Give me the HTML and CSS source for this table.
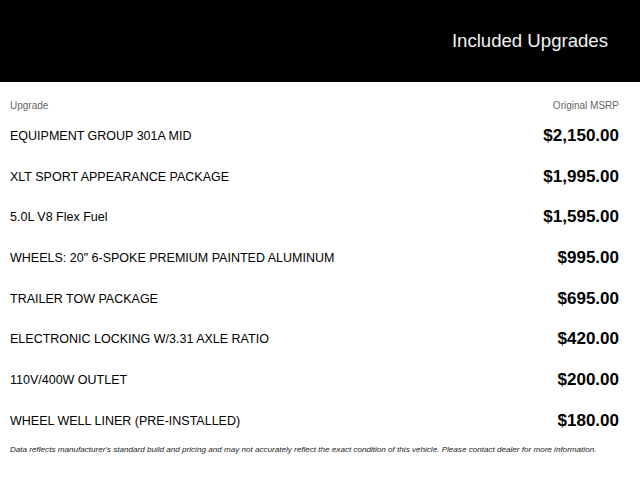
FILE: index.html
```html
<!DOCTYPE html>
<html>
<head>
<meta charset="utf-8">
<link rel="stylesheet" href="styles.css">
</head>
<body>
<header class="banner">
  <h1 class="banner-title">Included Upgrades</h1>
</header>
<main class="upgrades">
  <div class="col-head">
    <span>Upgrade</span>
    <span>Original MSRP</span>
  </div>
  <div class="row"><span class="name">EQUIPMENT GROUP 301A MID</span><span class="price">$2,150.00</span></div>
  <div class="row"><span class="name">XLT SPORT APPEARANCE PACKAGE</span><span class="price">$1,995.00</span></div>
  <div class="row"><span class="name">5.0L V8 Flex Fuel</span><span class="price">$1,595.00</span></div>
  <div class="row"><span class="name">WHEELS: 20" 6-SPOKE PREMIUM PAINTED ALUMINUM</span><span class="price">$995.00</span></div>
  <div class="row"><span class="name">TRAILER TOW PACKAGE</span><span class="price">$695.00</span></div>
  <div class="row"><span class="name">ELECTRONIC LOCKING W/3.31 AXLE RATIO</span><span class="price">$420.00</span></div>
  <div class="row"><span class="name">110V/400W OUTLET</span><span class="price">$200.00</span></div>
  <div class="row"><span class="name">WHEEL WELL LINER (PRE-INSTALLED)</span><span class="price">$180.00</span></div>
  <p class="note">Data reflects manufacturer's standard build and pricing and may not accurately reflect the exact condition of this vehicle. Please contact dealer for more information.</p>
</main>
</body>
</html>
```

FILE: styles.css
```css
html, body {
  margin: 0;
  padding: 0;
  background: #fff;
  font-family: "Liberation Sans", Arial, sans-serif;
  color: #000;
}
.banner {
  background: #000;
  height: 82px;
  display: flex;
  align-items: center;
  justify-content: flex-end;
  padding-right: 32px;
}
.banner-title {
  margin: 0;
  font-size: 18.6px;
  font-weight: normal;
  color: #f2f2f2;
  line-height: 22px;
}
.upgrades {
  padding: 0 21px 0 10px;
  display: flex;
  flex-direction: column;
}
.col-head {
  display: flex;
  justify-content: space-between;
  font-size: 10px;
  line-height: 12px;
  color: #666;
  padding-top: 18px;
  padding-bottom: 3.65px;
}
.row {
  height: 40.7px;
  display: flex;
  align-items: center;
  justify-content: space-between;
}
.name {
  font-size: 12.5px;
}
.price {
  font-size: 17px;
  font-weight: bold;
}
.note {
  margin: 4px 0 0;
  font-size: 8.1px;
  line-height: 10px;
  font-style: italic;
  color: #222;
}
```
